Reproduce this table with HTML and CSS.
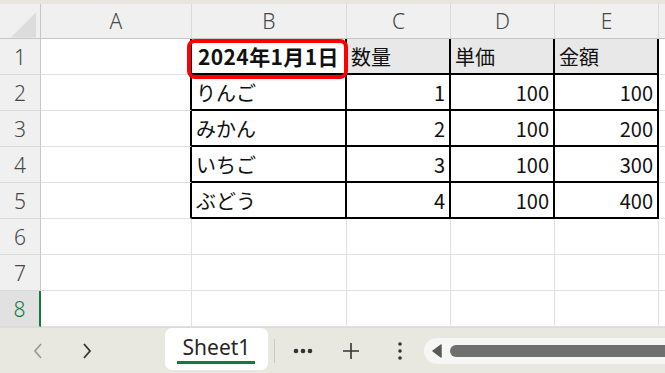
FILE: index.html
```html
<!DOCTYPE html>
<html lang="ja">
<head>
    <meta charset="UTF-8">
    <meta name="viewport" content="width=device-width, initial-scale=1.0">
    <title>Book1 - Sheet1</title>
    <link rel="stylesheet" href="styles.css">
</head>
<body>
    <div class="app">
        <div class="ribbon-edge"></div>

        <div class="sheet">
            <div class="grid">
                <!-- column headers -->
                <div class="cell corner">
                    <svg width="41" height="35" viewBox="0 0 41 35"><polygon points="37,8 37,34 11,34" fill="#dcdcdc"/></svg>
                </div>
                <div class="cell hd">A</div>
                <div class="cell hd">B</div>
                <div class="cell hd">C</div>
                <div class="cell hd">D</div>
                <div class="cell hd">E</div>
                <div class="cell hd last"></div>

                <!-- row 1 -->
                <div class="cell rh">1</div>
                <div class="cell edge"></div>
                <div class="cell tb bold">2024年1月1日</div>
                <div class="cell tb fill">数量</div>
                <div class="cell tb fill">単価</div>
                <div class="cell tb fill">金額</div>
                <div class="cell last"></div>

                <!-- row 2 -->
                <div class="cell rh">2</div>
                <div class="cell edge"></div>
                <div class="cell tb">りんご</div>
                <div class="cell tb num">1</div>
                <div class="cell tb num">100</div>
                <div class="cell tb num">100</div>
                <div class="cell last"></div>

                <!-- row 3 -->
                <div class="cell rh">3</div>
                <div class="cell edge"></div>
                <div class="cell tb">みかん</div>
                <div class="cell tb num">2</div>
                <div class="cell tb num">100</div>
                <div class="cell tb num">200</div>
                <div class="cell last"></div>

                <!-- row 4 -->
                <div class="cell rh">4</div>
                <div class="cell edge"></div>
                <div class="cell tb">いちご</div>
                <div class="cell tb num">3</div>
                <div class="cell tb num">100</div>
                <div class="cell tb num">300</div>
                <div class="cell last"></div>

                <!-- row 5 -->
                <div class="cell rh">5</div>
                <div class="cell edge"></div>
                <div class="cell tb">ぶどう</div>
                <div class="cell tb num">4</div>
                <div class="cell tb num">100</div>
                <div class="cell tb num">400</div>
                <div class="cell last"></div>

                <!-- empty rows -->
                <div class="cell rh">6</div>
                <div class="cell"></div><div class="cell"></div><div class="cell"></div>
                <div class="cell"></div><div class="cell"></div><div class="cell last"></div>

                <div class="cell rh">7</div>
                <div class="cell"></div><div class="cell"></div><div class="cell"></div>
                <div class="cell"></div><div class="cell"></div><div class="cell last"></div>

                <div class="cell rh active">8</div>
                <div class="cell"></div><div class="cell"></div><div class="cell"></div>
                <div class="cell"></div><div class="cell"></div><div class="cell last"></div>
            </div>

            <!-- highlight around the date cell -->
            <div class="mark"></div>
        </div>

        <div class="tabbar">
            <div class="nav">
                <button class="nav-btn disabled">
                    <svg width="12" height="18" viewBox="0 0 12 18"><polyline points="9,2 3,9 9,16" fill="none" stroke="currentColor" stroke-width="1.8"/></svg>
                </button>
                <button class="nav-btn">
                    <svg width="12" height="18" viewBox="0 0 12 18"><polyline points="3,2 9,9 3,16" fill="none" stroke="currentColor" stroke-width="1.8"/></svg>
                </button>
            </div>

            <div class="tab">Sheet1</div>
            <div class="divider"></div>

            <button class="icon-btn more">
                <svg width="20" height="6" viewBox="0 0 20 6"><circle cx="3" cy="3" r="2.3"/><circle cx="10" cy="3" r="2.3"/><circle cx="17" cy="3" r="2.3"/></svg>
            </button>
            <button class="icon-btn add">
                <svg width="20" height="20" viewBox="0 0 20 20"><path d="M10 2v16M2 10h16" stroke="currentColor" stroke-width="1.6"/></svg>
            </button>
            <button class="icon-btn kebab">
                <svg width="6" height="20" viewBox="0 0 6 20"><circle cx="3" cy="3" r="1.8"/><circle cx="3" cy="10" r="1.8"/><circle cx="3" cy="17" r="1.8"/></svg>
            </button>

            <div class="hscroll">
                <svg class="arrow" width="10" height="14" viewBox="0 0 10 14"><path d="M9 1v12L1 7z" fill="#5a5a5a" stroke="#5a5a5a" stroke-width="1.5" stroke-linejoin="round"/></svg>
                <div class="thumb"></div>
            </div>
        </div>
    </div>
</body>
</html>
```

FILE: styles.css
```css
* {
    margin: 0;
    padding: 0;
    box-sizing: border-box;
}

body {
    font-family: "Noto Sans CJK JP", "Noto Sans", sans-serif;
    background: #ffffff;
    width: 665px;
    height: 373px;
    overflow: hidden;
}

.app {
    display: flex;
    flex-direction: column;
    height: 373px;
}

.ribbon-edge {
    height: 4px;
    background: #e6e6df;
}

/* worksheet */

.sheet {
    position: relative;
    overflow: hidden;
}

.grid {
    display: grid;
    grid-template-columns: 41px 151px 155px 104px 104px 104px 20px;
    grid-template-rows: 35px repeat(8, 36px);
    width: 680px;
}

.cell {
    border-right: 1px solid #e1e1e1;
    border-bottom: 1px solid #e1e1e1;
    font-size: 20px;
    color: #111;
    display: flex;
    align-items: center;
    padding: 0 4px;
    white-space: nowrap;
    overflow: hidden;
}

.corner {
    background: #f0f0f0;
    padding: 0;
    border-right: 1px solid #c6c6c6;
    border-bottom: 1px solid #c6c6c6;
}

.hd {
    background: #f0f0f0;
    justify-content: center;
    color: #474747;
    font-family: "Noto Sans", sans-serif;
    font-size: 21px;
    font-weight: 300;
    border-right: 1px solid #dadada;
    border-bottom: 1px solid #c6c6c6;
}

.rh {
    background: #f0f0f0;
    justify-content: center;
    color: #474747;
    font-family: "Noto Sans", sans-serif;
    font-size: 21px;
    font-weight: 300;
    border-right: 1px solid #c6c6c6;
    border-bottom: 1px solid #dadada;
}

.rh.active {
    background: #e1e1e1;
    color: #107c41;
    border-right: 2px solid #107c41;
}

.edge {
    border-right: 2px solid #000;
}

.tb {
    border-right: 2px solid #000;
    border-bottom: 2px solid #000;
}

.fill {
    background: #e8e8e8;
}

.bold {
    font-weight: 700;
    font-size: 21px;
    letter-spacing: 0.4px;
    padding-left: 6px;
}

.num {
    justify-content: flex-end;
}

.mark {
    position: absolute;
    left: 187px;
    top: 35px;
    width: 161px;
    height: 40px;
    border: 4px solid #ff0000;
    border-radius: 8px;
}

/* sheet tabs */

.tabbar {
    flex: 1;
    display: flex;
    align-items: center;
    background: #e8e8e1;
    border-top: 1px solid #dcdcd6;
    overflow: hidden;
}

button {
    border: none;
    background: none;
    display: flex;
    align-items: center;
    justify-content: center;
    color: #333;
    height: 30px;
}

.nav {
    display: flex;
    gap: 9px;
    width: 165px;
    padding-left: 18px;
}

.nav-btn {
    width: 40px;
}

.nav-btn.disabled {
    color: #9a9a9a;
}

.tab {
    align-self: flex-start;
    width: 103px;
    height: 42px;
    background: #ffffff;
    border-radius: 7px;
    display: flex;
    align-items: center;
    justify-content: center;
    font-family: "Noto Sans", sans-serif;
    font-size: 21px;
    color: #262626;
    position: relative;
    padding-bottom: 5px;
}

.tab::after {
    content: "";
    position: absolute;
    left: 12px;
    right: 13px;
    bottom: 6px;
    height: 3px;
    background: #107c41;
}

.divider {
    width: 1px;
    height: 24px;
    background: #c9c9c3;
    margin-left: 6px;
}

.icon-btn svg {
    fill: #333;
}

.more {
    width: 56px;
}

.add {
    width: 40px;
}

.kebab {
    width: 40px;
    margin-left: 9px;
}

.hscroll {
    flex: 1;
    height: 26px;
    margin-left: 4px;
    margin-right: -20px;
    background: #f6f6f4;
    border-radius: 13px;
    display: flex;
    align-items: center;
    padding-left: 8px;
}

.arrow {
    flex-shrink: 0;
}

.thumb {
    flex: 1;
    height: 12px;
    margin-left: 8px;
    background: #6f6f6f;
    border-radius: 6px;
}
```
